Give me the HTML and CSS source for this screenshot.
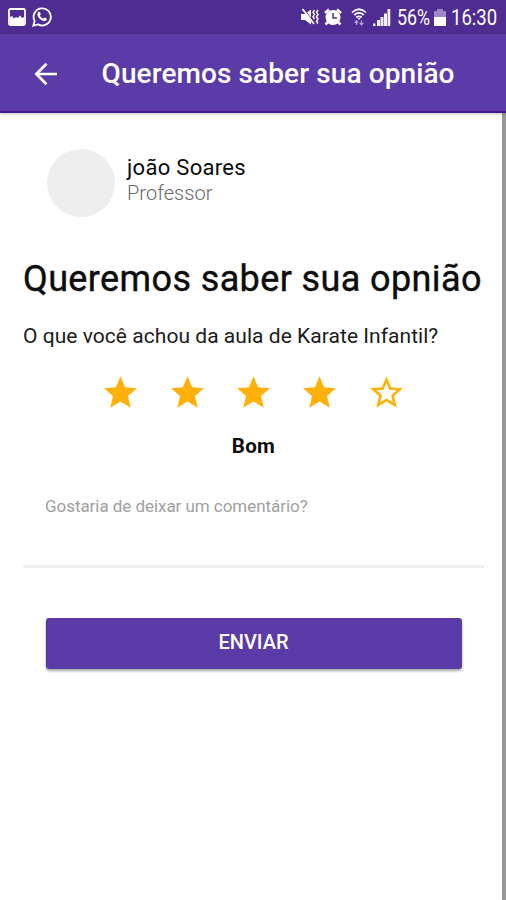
FILE: index.html
```html
<!DOCTYPE html>
<html lang="pt-BR">
<head>
<meta charset="utf-8">
<title>Queremos saber sua opnião</title>
<link rel="stylesheet" href="styles.css">
</head>
<body>
<div class="status">
  <svg class="ic-photo" width="18" height="18" viewBox="0 0 18 18"><rect x="1" y="1" width="16" height="16" rx="1.5" fill="none" stroke="#fff" stroke-width="1.8"/><path d="M2 16V9l2-1 2 2.500 2-1.500 2 1 2-2.500 2 2.500 2-1V16z" fill="#fff"/></svg>
  <svg class="ic-chat" width="20" height="20" viewBox="0 0 20 20"><path d="M1.3 18.7l1.3-4.8a8.6 8.6 0 1 1 3.4 3.5z" fill="none" stroke="#fff" stroke-width="1.8"/><path d="M6.2 5.2c.8-.7 1.6-.5 1.9.3l.7 1.7-1 1.3c.8 1.5 1.8 2.5 3.4 3.2l1.2-1.3 2.1 1c.6.4.2 1.6-.4 2.1-1.5 1.3-4.1.3-6.1-1.5C5.500 10 4.700 6.800 6.200 5.200z" fill="#fff"/></svg>
  <div class="status-right">
    <svg class="ic-mute" width="19" height="18" viewBox="0 0 19 18"><path d="M0 6h4l6-4.500v15l-6-4.500H0z" fill="#fff"/><path d="M3 1l10 13" stroke="#4f2c92" stroke-width="1"/><path d="M1.500 1l11.500 15" stroke="#fff" stroke-width="1.800"/><path d="M13.500 2l-1.500 2.200 1.500 2.300L12 8.700l1.500 2.300M17 2l-1.500 2.200L17 6.500l-1.500 2.200L17 11l-1.500 2.200L17 15.500" fill="none" stroke="#fff" stroke-width="1.500"/></svg>
    <svg class="ic-alarm" width="18" height="18" viewBox="0 0 18 18"><circle cx="9" cy="9.500" r="7.500" fill="#fff"/><path d="M1 5l4-3.500M17 5l-4-3.500M4 14l-2.500 2.500M14 14l2.500 2.500" stroke="#fff" stroke-width="2.600"/><path d="M9 5v5h4" fill="none" stroke="#4f2c92" stroke-width="1.500"/></svg>
    <svg class="ic-wifi" width="16" height="18" viewBox="0 0 16 18"><path d="M1 4.500Q8-2 15 4.500M3.200 7Q8 2.800 12.800 7M5.300 9.300Q8 7.300 10.700 9.300" fill="none" stroke="#fff" stroke-width="1.700"/><path d="M6.300 10h3.400L8 12z" fill="#fff"/><path d="M5.500 17v-4M3.800 14.800l1.700-2 1.700 2M10.500 12.500v4M8.800 14.800l1.700 2 1.700-2" fill="none" stroke="#b9a6d8" stroke-width="1.200"/></svg>
    <svg class="ic-signal" width="18" height="17" viewBox="0 0 18 17"><path d="M0 14.500h2.500V17H0zM4 11h3v6H4zM7.500 8h3v9h-3zM11 4.500h3V17h-3zM14.500 0h2.800v17h-2.800z" fill="#fff" fill-opacity=".92"/></svg>
    <span class="battery-text">56%</span>
    <svg class="ic-battery" width="12" height="17" viewBox="0 0 12 17"><path d="M3 0h6v2h3v15H0V2h3z" fill="#9d87c5"/><path d="M0 8h12v9H0z" fill="#fff"/></svg>
    <span class="clock">16:30</span>
  </div>
</div>
<header class="bar">
  <svg class="back" width="24" height="24" viewBox="0 0 24 24"><path d="M23 12H3M12.500 1.800L2.300 12l10.200 10.200" fill="none" stroke="#fff" stroke-width="2.700"/></svg>
  <h1 class="bar-title">Queremos saber sua opnião</h1>
</header>
<main class="page">
  <section class="person">
    <div class="avatar"></div>
    <div>
      <div class="name">joão Soares</div>
      <div class="role">Professor</div>
    </div>
  </section>
  <h2 class="heading">Queremos saber sua opnião</h2>
  <p class="question">O que você achou da aula de Karate Infantil?</p>
  <div class="stars">
    <svg viewBox="2 2 20 19"><path class="star" d="M12 17.270L18.180 21l-1.640-7.030L22 9.240l-7.190-.61L12 2 9.190 8.630 2 9.240l5.460 4.730L5.820 21z"/></svg>
    <svg viewBox="2 2 20 19"><path class="star" d="M12 17.270L18.180 21l-1.640-7.030L22 9.240l-7.190-.61L12 2 9.190 8.630 2 9.240l5.460 4.730L5.820 21z"/></svg>
    <svg viewBox="2 2 20 19"><path class="star" d="M12 17.270L18.180 21l-1.640-7.030L22 9.240l-7.190-.61L12 2 9.190 8.630 2 9.240l5.460 4.730L5.820 21z"/></svg>
    <svg viewBox="2 2 20 19"><path class="star" d="M12 17.270L18.180 21l-1.640-7.030L22 9.240l-7.190-.61L12 2 9.190 8.630 2 9.240l5.460 4.730L5.820 21z"/></svg>
    <svg viewBox="2 2 20 19"><path class="star" d="M22 9.240l-7.190-.62L12 2 9.190 8.630 2 9.240l5.460 4.730L5.820 21 12 17.270 18.180 21l-1.630-7.030L22 9.240zM12 15.400l-3.760 2.270 1-4.280-3.320-2.880 4.380-.38L12 6.100l1.710 4.040 4.380.38-3.320 2.880 1 4.280L12 15.400z"/></svg>
  </div>
  <div class="rating">Bom</div>
  <div class="comment">Gostaria de deixar um comentário?</div>
  <button class="send">ENVIAR</button>
</main>
</body>
</html>
```
FILE: styles.css
```css
* { box-sizing: border-box; }
body {
  margin: 0;
  height: 900px;
  overflow: hidden;
  display: flex;
  flex-direction: column;
  background: #fff;
  color: #0c0c0c;
  font-family: Roboto, "Liberation Sans", sans-serif;
}
h1, h2, p { margin: 0; white-space: nowrap; }
.status {
  height: 34px;
  flex: none;
  display: flex;
  align-items: center;
  padding: 0 9px 0 8px;
  background: #4f2c92;
  color: #fff;
}
.status svg { flex: none; }
.ic-chat { margin-left: 6px; }
.status-right {
  margin-left: auto;
  display: flex;
  align-items: center;
  white-space: nowrap;
}
.ic-alarm { margin-left: 4px; }
.ic-wifi { margin-left: 9px; }
.ic-signal { margin-left: 6px; }
.battery-text, .clock {
  font-size: 21.500px;
  line-height: 34px;
  padding-top: 2px;
  transform-origin: left center;
}
.battery-text { width: 34px; margin-left: 6px; transform: scaleX(.83); }
.ic-battery { margin-left: 3px; }
.clock { width: 46px; margin-left: 5px; transform: scaleX(.86); }
.bar {
  height: 79px;
  flex: none;
  display: flex;
  align-items: center;
  padding: 2px 0 0 34px;
  background: #5a3ba8;
  border-bottom: 2px solid #47178f;
  color: #fff;
  box-shadow: 0 1px 3px rgba(0, 0, 0, .25);
  z-index: 1;
}
.bar-title {
  margin-left: 43.500px;
  padding-top: 1px;
  font-size: 28px;
  font-weight: 500;
  line-height: 32px;
  letter-spacing: .1px;
}
.page {
  flex: 1;
  padding: 36px 18px 0 23px;
  border-right: 4px solid #999;
}
.person { display: flex; padding-left: 24px; }
.avatar {
  width: 68px;
  height: 68px;
  margin-right: 12px;
  border-radius: 50%;
  background: #eee;
}
.name { padding-top: 6px; font-size: 22px; line-height: 26px; letter-spacing: .3px; }
.role { font-size: 20px; line-height: 25px; color: #686868; font-weight: 300; letter-spacing: .05px; }
.heading {
  margin-top: 39px;
  font-size: 36px;
  font-weight: 400;
  line-height: 46px;
  letter-spacing: .38px;
  -webkit-text-stroke: .4px currentColor;
}
.question { margin-top: 21px; font-size: 21px; line-height: 26px; letter-spacing: .04px; color: #1b1b1b; }
.stars {
  display: flex;
  justify-content: center;
  gap: 33.300px;
  margin-top: 27px;
}
.stars svg { width: 33px; height: 32px; flex: none; }
.star { fill: #ffb10a; }
.rating {
  margin-top: 25px;
  text-align: center;
  font-size: 20.500px;
  line-height: 26px;
  font-weight: 700;
  letter-spacing: .3px;
}
.comment {
  height: 87px;
  margin-top: 22px;
  padding: 14px 22px 0;
  border-bottom: 3px solid #f0f0f0;
  font-size: 17px;
  line-height: 22px;
  letter-spacing: -.05px;
  color: #a0a0a0;
}
.send {
  display: block;
  width: 416px;
  height: 51px;
  margin: 50px 0 0 22.500px;
  padding: 0 0 3px;
  border: 0;
  border-radius: 3px;
  background: #5a3ba8;
  box-shadow: 0 2px 3px rgba(0, 0, 0, .35);
  color: #fff;
  font: 500 20px/26px Roboto, sans-serif;
}
```
